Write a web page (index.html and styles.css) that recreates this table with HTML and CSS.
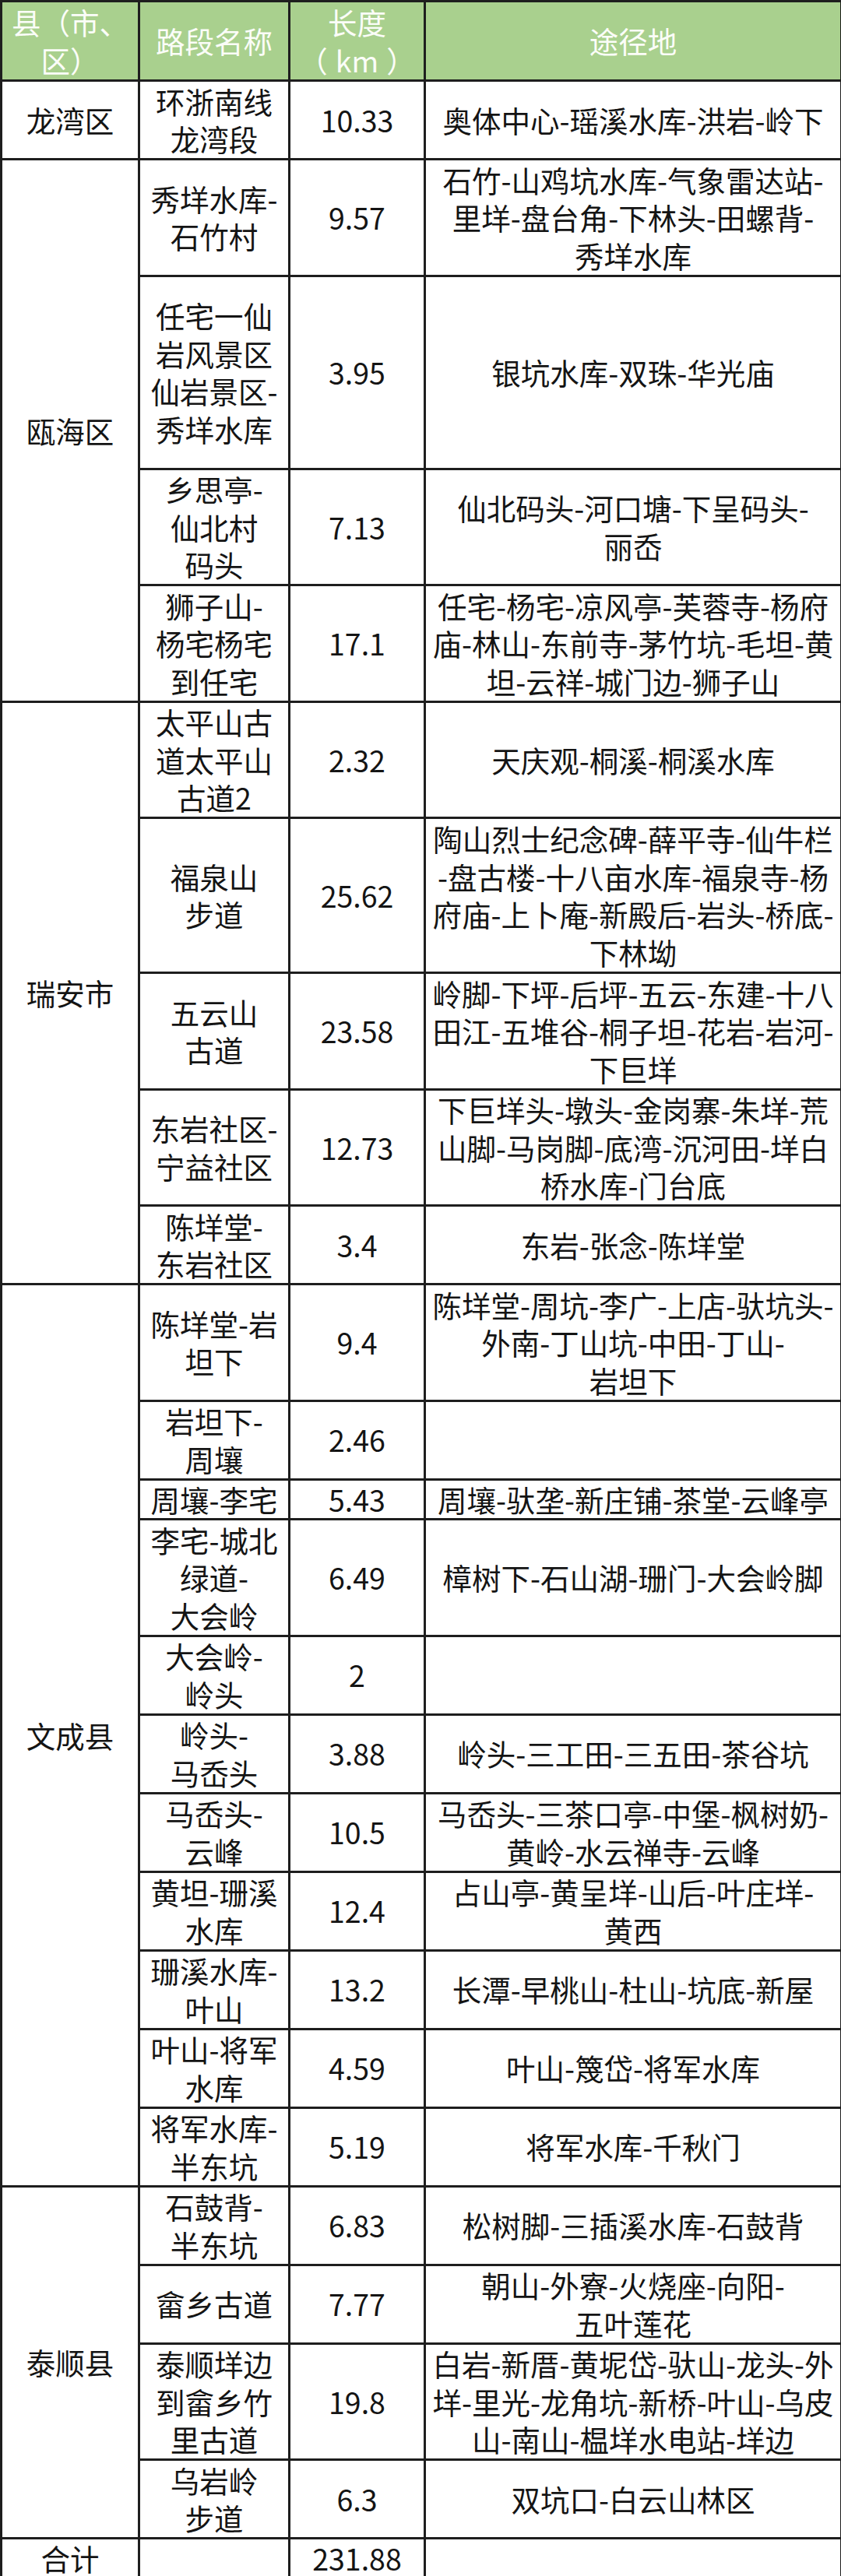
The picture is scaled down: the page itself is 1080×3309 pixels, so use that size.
FILE: index.html
```html
<!DOCTYPE html>
<html lang="zh-CN">
<head>
<meta charset="utf-8">
<title>绿道路段表</title>
<link rel="stylesheet" href="styles.css">
</head>
<body>
<table class="routes">
  <colgroup>
    <col class="c-county">
    <col class="c-name">
    <col class="c-len">
    <col class="c-via">
  </colgroup>
  <thead>
    <tr class="head">
      <th>县（市、<br>区）</th>
      <th>路段名称</th>
      <th>长度<br>（<span class="unit">km</span>）</th>
      <th>途径地</th>
    </tr>
  </thead>
  <tbody>
    <tr class="h2">
      <td>龙湾区</td>
      <td>环浙南线<br>龙湾段</td>
      <td>10.33</td>
      <td>奥体中心-瑶溪水库-洪岩-岭下</td>
    </tr>
    <tr class="h3">
      <td rowspan="4">瓯海区</td>
      <td>秀垟水库-<br>石竹村</td>
      <td>9.57</td>
      <td>石竹-山鸡坑水库-气象雷达站-<br>里垟-盘台角-下林头-田螺背-<br>秀垟水库</td>
    </tr>
    <tr class="h5">
      <td>任宅一仙<br>岩风景区<br>仙岩景区-<br>秀垟水库</td>
      <td>3.95</td>
      <td>银坑水库-双珠-华光庙</td>
    </tr>
    <tr class="h3">
      <td>乡思亭-<br>仙北村<br>码头</td>
      <td>7.13</td>
      <td>仙北码头-河口塘-下呈码头-<br>丽岙</td>
    </tr>
    <tr class="h3">
      <td>狮子山-<br>杨宅杨宅<br>到任宅</td>
      <td>17.1</td>
      <td>任宅-杨宅-凉风亭-芙蓉寺-杨府<br>庙-林山-东前寺-茅竹坑-毛坦-黄<br>坦-云祥-城门边-狮子山</td>
    </tr>
    <tr class="h3">
      <td rowspan="5">瑞安市</td>
      <td>太平山古<br>道太平山<br>古道2</td>
      <td>2.32</td>
      <td>天庆观-桐溪-桐溪水库</td>
    </tr>
    <tr class="h4">
      <td>福泉山<br>步道</td>
      <td>25.62</td>
      <td>陶山烈士纪念碑-薛平寺-仙牛栏<br>-盘古楼-十八亩水库-福泉寺-杨<br>府庙-上卜庵-新殿后-岩头-桥底-<br>下林坳</td>
    </tr>
    <tr class="h3">
      <td>五云山<br>古道</td>
      <td>23.58</td>
      <td>岭脚-下坪-后坪-五云-东建-十八<br>田江-五堆谷-桐子坦-花岩-岩河-<br>下巨垟</td>
    </tr>
    <tr class="h3">
      <td>东岩社区-<br>宁益社区</td>
      <td>12.73</td>
      <td>下巨垟头-墩头-金岗寨-朱垟-荒<br>山脚-马岗脚-底湾-沉河田-垟白<br>桥水库-门台底</td>
    </tr>
    <tr class="h2">
      <td>陈垟堂-<br>东岩社区</td>
      <td>3.4</td>
      <td>东岩-张念-陈垟堂</td>
    </tr>
    <tr class="h3">
      <td rowspan="11">文成县</td>
      <td>陈垟堂-岩<br>坦下</td>
      <td>9.4</td>
      <td>陈垟堂-周坑-李广-上店-驮坑头-<br>外南-丁山坑-中田-丁山-<br>岩坦下</td>
    </tr>
    <tr class="h2">
      <td>岩坦下-<br>周壤</td>
      <td>2.46</td>
      <td></td>
    </tr>
    <tr class="h1">
      <td>周壤-李宅</td>
      <td>5.43</td>
      <td>周壤-驮垄-新庄铺-茶堂-云峰亭</td>
    </tr>
    <tr class="h3">
      <td>李宅-城北<br>绿道-<br>大会岭</td>
      <td>6.49</td>
      <td>樟树下-石山湖-珊门-大会岭脚</td>
    </tr>
    <tr class="h2">
      <td>大会岭-<br>岭头</td>
      <td>2</td>
      <td></td>
    </tr>
    <tr class="h2">
      <td>岭头-<br>马岙头</td>
      <td>3.88</td>
      <td>岭头-三工田-三五田-茶谷坑</td>
    </tr>
    <tr class="h2">
      <td>马岙头-<br>云峰</td>
      <td>10.5</td>
      <td>马岙头-三茶口亭-中堡-枫树奶-<br>黄岭-水云禅寺-云峰</td>
    </tr>
    <tr class="h2">
      <td>黄坦-珊溪<br>水库</td>
      <td>12.4</td>
      <td>占山亭-黄呈垟-山后-叶庄垟-<br>黄西</td>
    </tr>
    <tr class="h2">
      <td>珊溪水库-<br>叶山</td>
      <td>13.2</td>
      <td>长潭-早桃山-杜山-坑底-新屋</td>
    </tr>
    <tr class="h2">
      <td>叶山-将军<br>水库</td>
      <td>4.59</td>
      <td>叶山-篾岱-将军水库</td>
    </tr>
    <tr class="h2">
      <td>将军水库-<br>半东坑</td>
      <td>5.19</td>
      <td>将军水库-千秋门</td>
    </tr>
    <tr class="h2">
      <td rowspan="4">泰顺县</td>
      <td>石鼓背-<br>半东坑</td>
      <td>6.83</td>
      <td>松树脚-三插溪水库-石鼓背</td>
    </tr>
    <tr class="h2">
      <td>畲乡古道</td>
      <td>7.77</td>
      <td>朝山-外寮-火烧座-向阳-<br>五叶莲花</td>
    </tr>
    <tr class="h3">
      <td>泰顺垟边<br>到畲乡竹<br>里古道</td>
      <td>19.8</td>
      <td>白岩-新厝-黄坭岱-驮山-龙头-外<br>垟-里光-龙角坑-新桥-叶山-乌皮<br>山-南山-榅垟水电站-垟边</td>
    </tr>
    <tr class="h2">
      <td>乌岩岭<br>步道</td>
      <td>6.3</td>
      <td>双坑口-白云山林区</td>
    </tr>
    <tr class="h1">
      <td>合计</td>
      <td></td>
      <td>231.88</td>
      <td></td>
    </tr>
  </tbody>
</table>
</body>
</html>
```

FILE: styles.css
```css
html, body {
  margin: 0;
  padding: 0;
  background: #ffffff;
}

.routes {
  border-collapse: collapse;
  table-layout: fixed;
  width: 1079px;
  margin: 0;
  font-family: "Noto Sans CJK SC", "Noto Sans", sans-serif;
  font-size: 37.5px;
  line-height: 48.5px;
  color: #141414;
  text-spacing-trim: space-all;
}

.c-county { width: 177px; }
.c-name { width: 193px; }
.c-len { width: 174px; }
.c-via { width: 535px; }

.routes th,
.routes td {
  border: 3px solid #1e1e1e;
  padding: 0;
  text-align: center;
  vertical-align: middle;
  white-space: nowrap;
  font-weight: 400;
}

.routes th {
  background: #a9d08e;
  color: #fbfdf8;
}

.unit {
  padding: 0 10px;
}

.head { height: 102px; }
.h1 { height: 50px; }
.h2 { height: 101px; }
.h3 { height: 149.5px; }
.h4 { height: 199px; }
.h5 { height: 248px; }
```
